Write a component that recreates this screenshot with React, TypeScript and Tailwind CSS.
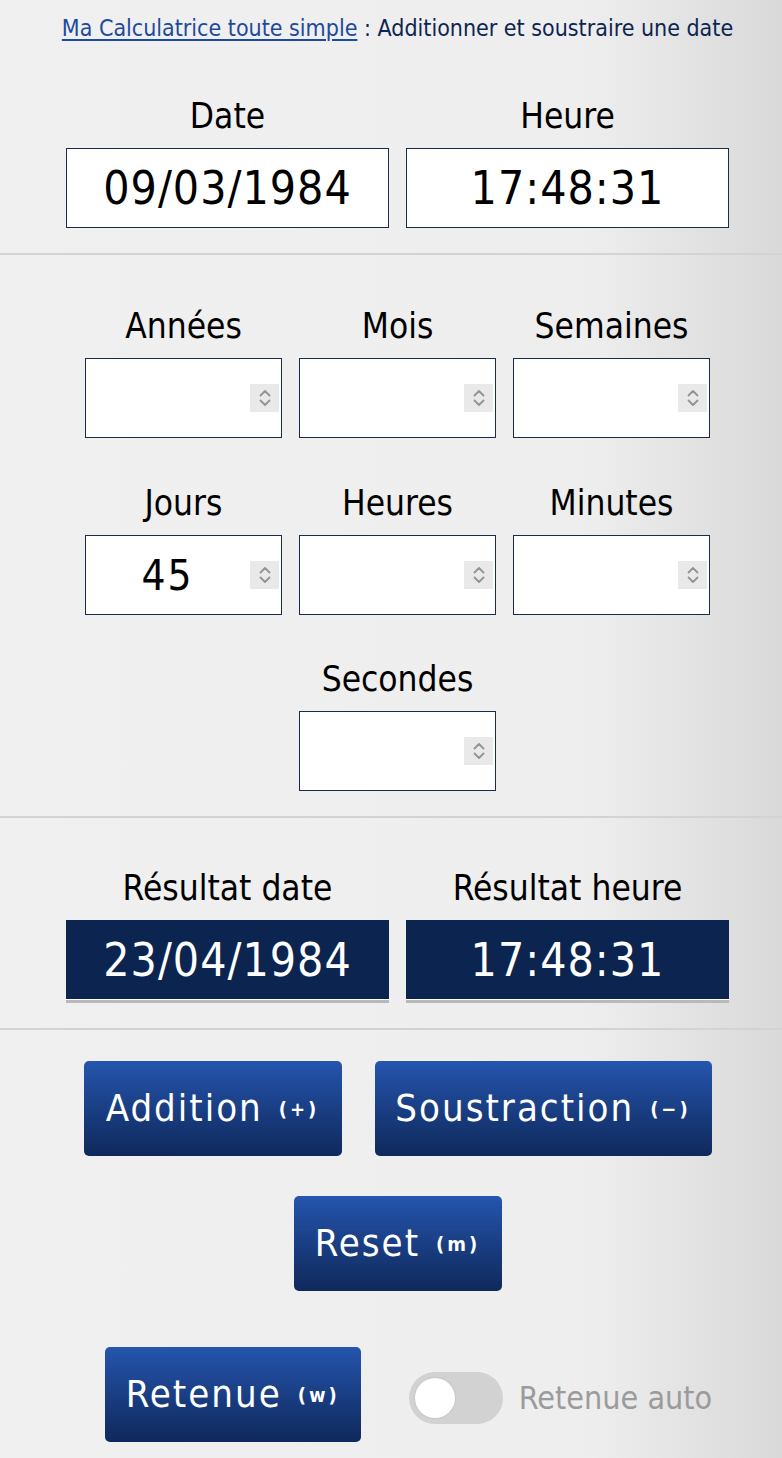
const font = { fontFamily: "'Liberation Sans Narrow', 'DejaVu Sans Condensed', 'Liberation Sans', sans-serif" };

function Spinner() {
  return (
    <div className="absolute right-[2px] top-1/2 flex h-[28px] w-[29px] -translate-y-1/2 flex-col items-center justify-center bg-[#e9e9ea]">
      <svg width="14" height="22" viewBox="0 0 14 22" fill="none" stroke="#939393" strokeWidth="1.8" strokeLinecap="round" strokeLinejoin="round">
        <path d="M2.5 8.5 L7 4 L11.5 8.5" />
        <path d="M2.5 13.5 L7 18 L11.5 13.5" />
      </svg>
    </div>
  );
}

function Label({ children }: { children: React.ReactNode }) {
  return <div className="mb-3 h-10 text-center text-[35px] leading-[40px] text-black">{children}</div>;
}

function NumberField({ label, value }: { label: string; value?: string }) {
  return (
    <div className="w-[197px]">
      <Label>{label}</Label>
      <div className="relative flex h-20 items-center border border-[#1b2b4b] bg-white pr-[32px]">
        <span className="w-full text-center text-[42px] tracking-[2px] text-black">{value}</span>
        <Spinner />
      </div>
    </div>
  );
}

function Divider() {
  return <div className="h-[2px] w-full bg-[#d3d3d3]" />;
}

function BlueButton({ label, hint, className }: { label: string; hint: string; className: string }) {
  return (
    <button
      className={
        "flex h-[95px] items-center justify-center gap-[16px] rounded-[5px] bg-gradient-to-b from-[#2555ae] to-[#0f295c] text-white " +
        className
      }
    >
      <span className="text-[38px] tracking-[2px]">{label}</span>
      <span className="text-[20px] font-bold tracking-[3px]">{hint}</span>
    </button>
  );
}

export default function App() {
  return (
    <div className="min-h-[1458px] w-full bg-gradient-to-r from-[#f0f0f0] via-[#eeeeee] via-75% to-[#d9d9d9] pl-[13px]" style={font}>
      <div className="flex h-14 items-center justify-center text-[23px]">
        <a href="#" className="text-[#1d4a9c] underline decoration-[1.5px] underline-offset-[3px]">
          Ma Calculatrice toute simple
        </a>
        <span className="whitespace-pre text-[#0d2550]"> : Additionner et soustraire une date</span>
      </div>

      <div className="mt-10 flex justify-center gap-[17px]">
        <div className="w-[323px]">
          <Label>Date</Label>
          <div className="flex h-20 items-center justify-center border border-[#1b2b4b] bg-white text-[46px] tracking-[1px] text-black">
            09/03/1984
          </div>
        </div>
        <div className="w-[323px]">
          <Label>Heure</Label>
          <div className="flex h-20 items-center justify-center border border-[#1b2b4b] bg-white text-[46px] tracking-[1px] text-black">
            17:48:31
          </div>
        </div>
      </div>

      <div className="mt-[25px] -ml-[13px]">
        <Divider />
      </div>

      <div className="mt-[51px] flex justify-center gap-[17px]">
        <NumberField label="Années" />
        <NumberField label="Mois" />
        <NumberField label="Semaines" />
      </div>
      <div className="mt-[45px] flex justify-center gap-[17px]">
        <NumberField label="Jours" value="45" />
        <NumberField label="Heures" />
        <NumberField label="Minutes" />
      </div>
      <div className="mt-[44px] flex justify-center">
        <NumberField label="Secondes" />
      </div>

      <div className="mt-[25px] -ml-[13px]">
        <Divider />
      </div>

      <div className="mt-[50px] flex justify-center gap-[17px]">
        <div className="w-[323px]">
          <Label>Résultat date</Label>
          <div className="flex h-[83px] items-center justify-center border-b-[3px] border-b-[#b9b9b9] bg-[#0b2550] text-[46px] tracking-[1px] text-white shadow-[inset_0_-1px_0_#ffffff]">
            23/04/1984
          </div>
        </div>
        <div className="w-[323px]">
          <Label>Résultat heure</Label>
          <div className="flex h-[83px] items-center justify-center border-b-[3px] border-b-[#b9b9b9] bg-[#0b2550] text-[46px] tracking-[1px] text-white shadow-[inset_0_-1px_0_#ffffff]">
            17:48:31
          </div>
        </div>
      </div>

      <div className="mt-[25px] -ml-[13px]">
        <Divider />
      </div>

      <div className="mt-[31px] flex justify-center gap-[33px]">
        <BlueButton label="Addition" hint="(+)" className="w-[258px]" />
        <BlueButton label="Soustraction" hint="(−)" className="w-[337px]" />
      </div>

      <div className="mt-10 flex justify-center">
        <BlueButton label="Reset" hint="(m)" className="w-[208px]" />
      </div>

      <div className="mt-14 flex items-center justify-center pl-[22px] pb-4">
        <BlueButton label="Retenue" hint="(w)" className="w-[256px]" />
        <div className="ml-12 mt-[7px] flex h-[52px] w-[94px] items-center rounded-full bg-[#d2d2d2] px-[6px]">
          <div className="h-[40px] w-[40px] rounded-full bg-white shadow-[0_0_2px_rgba(0,0,0,0.15)]" />
        </div>
        <span className="ml-4 mt-[7px] text-[32px] text-[#9b9b9b]">Retenue auto</span>
      </div>
    </div>
  );
}
